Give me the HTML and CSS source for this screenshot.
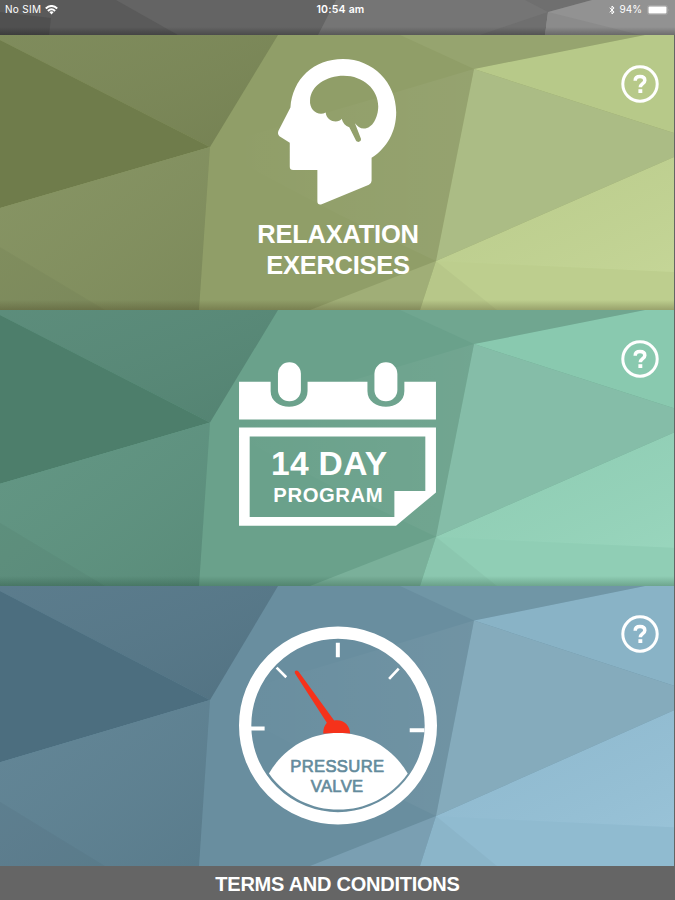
FILE: index.html
```html
<!doctype html>

<html lang="en">
  <head>
    <meta charset="UTF-8" />
    <title>Relaxation</title>
    <link rel="stylesheet" href="styles.css">
  </head>

  <body>
    <!-- shared shapes -->
    <svg class="defs" width="0" height="0">
      <defs>
        <linearGradient id="shade" x1="0" y1="0" x2="1" y2="1">
          <stop offset="0" stop-color="#fff" stop-opacity="0.03" />
          <stop offset="1" stop-color="#000" stop-opacity="0.05" />
        </linearGradient>
        <linearGradient id="glow" x1="0" y1="0" x2="1" y2="1">
          <stop offset="0" stop-color="#000" stop-opacity="0.03" />
          <stop offset="1" stop-color="#fff" stop-opacity="0.05" />
        </linearGradient>
        <linearGradient id="ridge" gradientUnits="userSpaceOnUse" x1="230" y1="0" x2="474" y2="0">
          <stop offset="0" stop-color="#fff" stop-opacity="0" />
          <stop offset="1" stop-color="#fff" stop-opacity="0.05" />
        </linearGradient>
      </defs>
      <symbol id="facets" viewBox="0 0 674 275" preserveAspectRatio="none">
        <path class="center" d="M0 0H674V275H0Z" />
        <path fill="url(#ridge)" d="M474 34L436 226L340 180L210 112L380 62Z" />
        <path class="top-left" d="M0 0H278L210 112L0 5Z" />
        <path fill="url(#shade)" d="M0 0H278L210 112L0 5Z" />
        <path class="left" d="M0 5L210 112L0 173Z" />
        <path class="bottom-left" d="M0 173L210 112L199 275H0Z" />
        <path fill="url(#shade)" d="M0 173L210 112L199 275H0Z" />
        <path fill="#000" opacity="0.03" d="M0 212L105 275H0Z" />
        <path class="center-right" d="M400 0H645L474 34Z" />
        <path class="wedge" d="M436 226L310 275H420Z" />
        <path class="right" d="M474 34L674 98V122L436 226Z" />
        <path class="top-right" d="M474 34L645 0H674V98Z" />
        <path class="bottom-right" d="M436 226L674 122V275H420Z" />
        <path fill="url(#glow)" d="M436 226L674 122V237Z" />
        <path fill="#000" opacity="0.02" d="M436 226L674 237V275H420Z" />
        <path fill="#000" opacity="0.03" d="M436 226L497 275H420Z" />
      </symbol>
      <symbol id="help" viewBox="0 0 38 38">
        <circle cx="19" cy="19" r="17.2" fill="none" stroke="#fff" stroke-width="3" />
        <path d="M14.2 15.8C14.2 12.9 16.2 11.6 19 11.6C21.9 11.6 23.8 13 23.8 15.4C23.8 18.5 19.3 18.6 19.3 22.2" fill="none" stroke="#fff" stroke-width="3.5" />
        <rect x="17.4" y="24.2" width="3.9" height="3.8" fill="#fff" />
      </symbol>
    </svg>

    <header class="status">
      <svg class="status-bg" viewBox="0 0 675 35" preserveAspectRatio="none">
        <path fill="#646464" d="M0 0H675V35H0Z" />
        <path fill="#5a5a5a" d="M0 0H116L178 35H0Z" />
        <path fill="#505050" d="M0 12L51 18L49 35H0Z" />
        <path fill="#757575" d="M336 0H675V35H318Z" />
        <path fill="#6f6f6f" d="M480 35L548 12L525 0H592L548 12L545 35Z" />
        <path fill="#929292" d="M548 12L592 0H675V35H545Z" />
        <path fill="#8b8b8b" d="M548 12L640 35H545Z" />
      </svg>
      <div class="carrier">
        <span>No SIM</span>
        <svg width="13" height="10" viewBox="0 0 13 10">
          <path fill="none" stroke="#fff" stroke-width="2" d="M.8 3.6Q6.5 -1.6 12.2 3.6M2.9 5.9Q6.5 2.7 10.1 5.9" />
          <path fill="#fff" d="M4.3 7.1Q6.5 5.5 8.7 7.1L6.5 9.6Z" />
        </svg>
      </div>
      <div class="time">10:54 am</div>
      <div class="battery">
        <svg width="6" height="10" viewBox="0 0 6 10">
          <path fill="none" stroke="#fff" d="M.7 2.8L5.1 7L3 9V1L5.1 3L.7 7.2" />
        </svg>
        <span>94%</span>
        <svg width="23" height="10" viewBox="0 0 23 10">
          <rect x=".5" y=".5" width="20" height="9" rx="2" fill="none" stroke="#aaa" stroke-width=".7" />
          <rect x="1.5" y="1.5" width="18" height="7" rx="1" fill="#fff" />
          <path fill="#aaa" d="M21.5 3.5Q23 5 21.5 6.5Z" />
        </svg>
      </div>
    </header>

    <main>
      <section class="panel relaxation">
        <svg class="background"><use href="#facets" /></svg>
        <svg class="head" viewBox="50 25 360 445">
          <path fill="#fff" fill-rule="evenodd" d="M90 174C96 88 160 28 248 28C338 28 408 99 408 188C408 246 380 296 334 325V394Q334 402 326 406L184 465Q171 468 171 456V362H98Q88 362 88 352V280L57 260Q50 254 54 244ZM149 151C151 108 198 78 250 78C309 78 354 119 354 170C354 203 337 237 311 237C299 237 291 230 284 221L302 268C304 277 292 281 287 273L267 233C255 230 248 221 244 208C235 222 199 219 196 189C174 201 146 182 149 151Z" />
        </svg>
        <h2>RELAXATION<br>EXERCISES</h2>
        <a class="help" href="#"><svg><use href="#help" /></svg></a>
      </section>

      <section class="panel program">
        <svg class="background"><use href="#facets" /></svg>
        <svg class="calendar" viewBox="28 35 592 493">
          <path fill="#fff" d="M28 94H123V122C123 185 234 185 234 122V94H414V122C414 185 525 185 525 122V94H620V208H28Z" />
          <rect x="145" y="36" width="69" height="117" rx="34" fill="#fff" />
          <rect x="435" y="36" width="69" height="117" rx="34" fill="#fff" />
          <path fill="#fff" fill-rule="evenodd" d="M28 232H620V427L500 527H28ZM60 259V501H495V423H588V259Z" />
          <text class="days" x="124" y="374" textLength="349">14 DAY</text>
          <text class="word" x="131" y="457" textLength="329">PROGRAM</text>
        </svg>
        <a class="help" href="#"><svg><use href="#help" /></svg></a>
      </section>

      <section class="panel valve">
        <svg class="background"><use href="#facets" /></svg>
        <svg class="gauge" viewBox="27 33 595 598">
          <circle cx="324.500" cy="332" r="279" fill="none" stroke="#fff" stroke-width="37" />
          <path fill="none" stroke="#fff" stroke-width="12" d="M324 83V127M62 341H104M540 346H584" />
          <path fill="none" stroke="#fff" stroke-width="8" d="M140 158L169 187M507 161L478 192" />
          <path fill="#f5321b" d="M280 356C280 342 284 332 291 324L195 175Q193 167 200 167Q205 167 208 173L313 317C340 312 360 330 361 356Z" />
          <path fill="#fff" d="M117 476C211 314 438 314 534 476C432 621 220 621 117 476Z" />
          <text class="label" x="181" y="471" textLength="282">PRESSURE</text>
          <text class="label" x="243" y="532" textLength="157">VALVE</text>
        </svg>
        <a class="help" href="#"><svg><use href="#help" /></svg></a>
      </section>
    </main>

    <footer>TERMS AND CONDITIONS</footer>
  </body>
</html>
```
FILE: styles.css
```css
* {
  box-sizing: border-box;
}

body {
  margin: 0;
  height: 900px;
  display: flex;
  flex-direction: column;
  background-color: #656565;
  color: white;
  font-family: "Liberation Sans", Arial, sans-serif;
  overflow: hidden;
}

svg {
  display: block;
}

.defs {
  position: absolute;
}

/* status bar */
.status {
  position: relative;
  height: 35px;
  padding: 3px 5px 0;
  display: grid;
  grid-template-columns: 1fr auto 1fr;
  align-items: start;
  font-family: Inter, sans-serif;
  font-size: 10px;
  line-height: 13px;
}

.status-bg {
  position: absolute;
  inset: 0;
  width: 100%;
  height: 100%;
  z-index: -1;
}

.status::after {
  content: "";
  position: absolute;
  left: 0;
  right: 0;
  bottom: 0;
  height: 8px;
  background: linear-gradient(transparent, rgba(0, 0, 0, 0.25));
}

.carrier,
.battery {
  display: flex;
  align-items: center;
  gap: 4px;
  letter-spacing: 0.3px;
}

.time {
  font-weight: 600;
  font-size: 10.5px;
  letter-spacing: 0.2px;
  padding-left: 6px;
}

.battery {
  justify-content: flex-end;
  gap: 5px;
  letter-spacing: 0;
}

/* panels */
main {
  width: 674px;
}

.panel {
  position: relative;
  height: 275px;
  display: flex;
  flex-direction: column;
  align-items: center;
}

.panel::after {
  content: "";
  position: absolute;
  left: 0;
  right: 0;
  bottom: 0;
  height: 10px;
  background: linear-gradient(transparent, rgba(60, 50, 20, 0.28));
}

.background {
  position: absolute;
  inset: 0;
  width: 100%;
  height: 100%;
  z-index: -1;
}

.left { fill: var(--left); }
.top-left { fill: var(--top-left); }
.bottom-left { fill: var(--bottom-left); }
.center { fill: var(--center); }
.center-right { fill: var(--center-right); }
.wedge { fill: var(--wedge); }
.right { fill: var(--right); }
.top-right { fill: var(--top-right); }
.bottom-right { fill: var(--bottom-right); }

.relaxation {
  --left: #6f7c4b;
  --top-left: #7b8857;
  --bottom-left: #83915f;
  --center: #909e68;
  --center-right: #96a46f;
  --wedge: #a0ae77;
  --right: #abbc85;
  --top-right: #b7c989;
  --bottom-right: #c1d391;
  padding-top: 23px;
}

.program {
  --left: #4d7e6b;
  --top-left: #578977;
  --bottom-left: #5e9380;
  --center: #6aa18b;
  --center-right: #70a690;
  --wedge: #7ab09a;
  --right: #85bda8;
  --top-right: #89c9af;
  --bottom-right: #93d3b9;
  height: 276px;
  padding-top: 52px;
}

.program::after {
  background: linear-gradient(transparent, rgba(20, 60, 40, 0.28));
}

.valve {
  --left: #4c6e7f;
  --top-left: #567889;
  --bottom-left: #5e8293;
  --center: #698e9f;
  --center-right: #7096a6;
  --wedge: #7a9fb2;
  --right: #85abbc;
  --top-right: #89b3c6;
  --bottom-right: #93bfd5;
  height: 280px;
  padding-top: 40px;
}

.valve::after {
  display: none;
}

.head {
  width: 120px;
  height: 148px;
}

h2 {
  margin: 13px 0 0 2px;
  font-size: 25.5px;
  line-height: 30.5px;
  letter-spacing: -0.25px;
  text-align: center;
}

.calendar {
  width: 197px;
  height: 164px;
  margin-left: 1px;
}

.calendar text {
  fill: white;
  font-weight: bold;
}

.days {
  font-size: 101px;
}

.word {
  font-size: 61px;
}

.gauge {
  width: 198px;
  height: 199px;
  margin-left: 2px;
}

.label {
  fill: #648b9c;
  stroke: #648b9c;
  stroke-width: 2px;
  font-size: 50px;
}

.help {
  position: absolute;
  top: 30px;
  right: 15px;
}

.help svg {
  width: 38px;
  height: 38px;
}

.valve .help {
  top: 29px;
}

footer {
  height: 34px;
  line-height: 36px;
  text-align: center;
  font-size: 20px;
  font-weight: bold;
  letter-spacing: -0.25px;
}
```
